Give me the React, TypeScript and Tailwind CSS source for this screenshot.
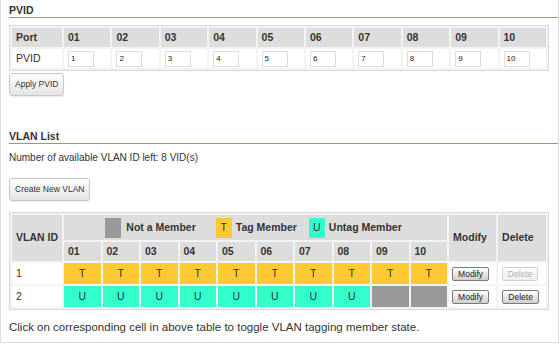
import React from 'react';

const ports = ['01', '02', '03', '04', '05', '06', '07', '08', '09', '10'];

type Member = 'T' | 'U' | 'N';

const vlans: { id: number; members: Member[]; canDelete: boolean }[] = [
  { id: 1, members: ['T', 'T', 'T', 'T', 'T', 'T', 'T', 'T', 'T', 'T'], canDelete: false },
  { id: 2, members: ['U', 'U', 'U', 'U', 'U', 'U', 'U', 'U', 'N', 'N'], canDelete: true },
];

const memberClass: Record<Member, string> = {
  T: 'bg-[#ffc933]',
  U: 'bg-[#33ffcc]',
  N: 'bg-[#999999]',
};

const SectionTitle = ({ children }: { children: React.ReactNode }) => (
  <h2 className="font-bold text-[10.5px] leading-[12px] pb-[1px] border-b border-[#e57373]">{children}</h2>
);

const PageButton = ({ children }: { children: React.ReactNode }) => (
  <button className="block h-[23px] px-[5px] text-[8.5px] text-[#333] rounded-[3px] border border-[#c8c8c8] bg-gradient-to-b from-white to-[#e4e4e4] shadow-[0_1px_1px_rgba(0,0,0,0.08)]">
    {children}
  </button>
);

const SmallButton = ({ children, disabled }: { children: React.ReactNode; disabled?: boolean }) => (
  <button
    disabled={disabled}
    className={
      disabled
        ? 'block h-[14px] w-[36px] text-[8.5px] leading-[12px] text-[#b0b0b0] rounded-[2px] border border-[#d0d0d0] bg-gradient-to-b from-white to-[#eeeeee]'
        : 'block h-[14px] w-[37px] text-[8.5px] leading-[12px] text-[#222] rounded-[2px] border border-[#7a7a7a] bg-gradient-to-b from-white to-[#cfcfcf]'
    }
  >
    {children}
  </button>
);

export default function App() {
  return (
    <div className="w-[559px] h-[343px] bg-white border-l border-r border-b border-[#dedede] pl-2 pt-[4px] text-[#333] text-[10px] font-['Liberation_Sans',Arial,sans-serif] overflow-hidden">
      {/* PVID */}
      <SectionTitle>PVID</SectionTitle>
      <table className="mt-[7px] w-[540px] table-fixed border-separate border-spacing-[2px] border border-[#d8d8d8] bg-[#f3f3f3]">
        <colgroup>
          <col className="w-[50px]" />
          {ports.map((p) => (
            <col key={p} />
          ))}
        </colgroup>
        <thead>
          <tr className="h-[19px] text-[10.5px]">
            <th className="bg-[#dddddd] text-left font-bold px-1 p-0">Port</th>
            {ports.map((p) => (
              <th key={p} className="bg-[#dddddd] text-left font-bold px-1 p-0">
                {p}
              </th>
            ))}
          </tr>
        </thead>
        <tbody>
          <tr className="h-[19px] text-[10.5px]">
            <td className="bg-white px-1 p-0">PVID</td>
            {ports.map((p, i) => (
              <td key={p} className="bg-white px-1 p-0">
                <input
                  defaultValue={String(i + 1)}
                  className="block w-[26px] h-[16px] border border-[#dcdcdc] px-[2px] text-[8px] text-[#222]"
                />
              </td>
            ))}
          </tr>
        </tbody>
      </table>
      <div className="mt-[2px]">
        <PageButton>Apply PVID</PageButton>
      </div>

      {/* VLAN List */}
      <div className="mt-[34px]">
        <SectionTitle>VLAN List</SectionTitle>
      </div>
      <p className="mt-[8px] leading-[12px]">Number of available VLAN ID left: 8 VID(s)</p>
      <div className="mt-[14px]">
        <PageButton>Create New VLAN</PageButton>
      </div>

      <table className="mt-[11px] border-separate border-spacing-[2px] border border-[#d8d8d8] bg-[#f3f3f3] table-fixed w-[540px] text-[10.5px]">
        <colgroup>
          <col className="w-[50px]" />
          {ports.map((p) => (
            <col key={p} className="w-[36.5px]" />
          ))}
          <col className="w-[47px]" />
          <col className="w-[48px]" />
        </colgroup>
        <thead>
          <tr className="h-[25px]">
            <th rowSpan={2} className="bg-[#dddddd] text-left font-bold px-1 p-0 whitespace-nowrap">
              VLAN ID
            </th>
            <th colSpan={10} className="bg-[#dddddd] p-0 font-bold">
              <div className="flex items-center justify-center pr-[4px]">
                <span className="w-4 h-5 bg-[#999999]" />
                <span className="ml-[5px]">Not a Member</span>
                <span className="ml-[20px] w-4 h-5 bg-[#ffc933] flex items-center justify-center font-normal">T</span>
                <span className="ml-[4px]">Tag Member</span>
                <span className="ml-[12px] w-4 h-5 bg-[#33ffcc] flex items-center justify-center font-normal">U</span>
                <span className="ml-[4px]">Untag Member</span>
              </div>
            </th>
            <th rowSpan={2} className="bg-[#dddddd] text-left font-bold px-1 p-0">
              Modify
            </th>
            <th rowSpan={2} className="bg-[#dddddd] text-left font-bold px-1 p-0">
              Delete
            </th>
          </tr>
          <tr className="h-[19px]">
            {ports.map((p) => (
              <th key={p} className="bg-[#dddddd] text-left font-bold px-1 p-0">
                {p}
              </th>
            ))}
          </tr>
        </thead>
        <tbody>
          {vlans.map((v) => (
            <tr key={v.id} className="h-[21px]">
              <td className="bg-white px-1 p-0">{v.id}</td>
              {v.members.map((m, i) => (
                <td key={i} className={`${memberClass[m]} text-center p-0 cursor-pointer`}>
                  {m === 'N' ? '' : m}
                </td>
              ))}
              <td className="bg-white p-0 pl-[3px]">
                <SmallButton>Modify</SmallButton>
              </td>
              <td className="bg-white p-0 pl-[4px]">
                <SmallButton disabled={!v.canDelete}>Delete</SmallButton>
              </td>
            </tr>
          ))}
        </tbody>
      </table>
      <p className="mt-[10px] text-[11.5px] leading-[14px]">
        Click on corresponding cell in above table to toggle VLAN tagging member state.
      </p>
    </div>
  );
}
